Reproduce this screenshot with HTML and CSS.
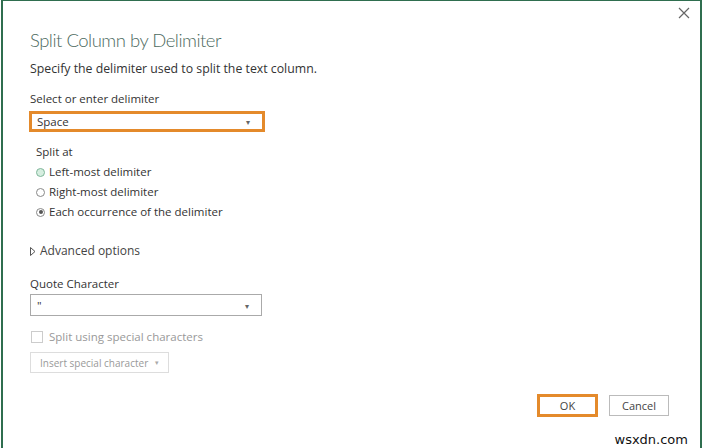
FILE: index.html
```html
<!DOCTYPE html>
<html lang="en">
<head>
    <meta charset="UTF-8">
    <title>Split Column by Delimiter</title>
    <link rel="stylesheet" href="styles.css">
</head>
<body>

<div class="dialog">
    <button class="close" type="button" aria-label="Close">
        <svg width="12" height="12" viewBox="0 0 12 12"><path d="M1 1L11 11M11 1L1 11" stroke="#666" stroke-width="1.2" fill="none"/></svg>
    </button>

    <h1 class="title">Split Column by Delimiter</h1>
    <p class="subtitle">Specify the delimiter used to split the text column.</p>

    <label class="field-label">Select or enter delimiter</label>
    <div class="select highlight">
        <span>Space</span>
        <span class="caret">&#9662;</span>
    </div>

    <div class="split-at">
        <div class="group-label">Split at</div>
        <label class="radio"><span class="dot hover"></span>Left-most delimiter</label>
        <label class="radio"><span class="dot"></span>Right-most delimiter</label>
        <label class="radio"><span class="dot checked"></span>Each occurrence of the delimiter</label>
    </div>

    <div class="advanced">
        <svg width="6" height="9" viewBox="0 0 6 9"><path d="M0.5 0.5L5 4.5L0.5 8.5Z" fill="none" stroke="#555" stroke-width="1"/></svg>
        <span>Advanced options</span>
    </div>

    <label class="field-label quote-label">Quote Character</label>
    <div class="select quote">
        <span>"</span>
        <span class="caret">&#9662;</span>
    </div>

    <label class="check disabled"><span class="box"></span>Split using special characters</label>
    <div class="insert">Insert special character <span class="caret">&#9662;</span></div>

    <div class="actions">
        <button class="btn highlight" type="button">OK</button>
        <button class="btn" type="button">Cancel</button>
    </div>

    <div class="watermark">wsxdn.com</div>
</div>

</body>
</html>
```

FILE: styles.css
```css
body { margin: 0; background: #fff; font-family: "Open Sans", "Noto Sans", sans-serif; color: #333; }
.dialog { position: relative; height: 448px; box-sizing: border-box; border-left: 2px solid #2f6e4f; border-right: 2px solid #2f6e4f; border-top: 1px solid #2f6e4f; margin-left: 1px; padding: 0 28px 0 27px; }
.close { position: absolute; top: 6px; right: 10px; background: none; border: 0; padding: 0; width: 12px; height: 12px; }
.title { margin: 26px 0 0; font-family: Lato, "Open Sans", sans-serif; font-weight: 300; font-size: 18.5px; letter-spacing: -0.5px; line-height: 26px; color: #4d6a60; }
.subtitle { margin: 7px 0 0; font-size: 12.3px; line-height: 18px; color: #333; }
.field-label { display: block; margin-top: 13px; font-size: 11.5px; line-height: 16px; color: #333; }
.select { display: flex; justify-content: space-between; align-items: center; box-sizing: border-box; border: 1px solid #aaa; background: #fff; font-size: 11.5px; padding: 0 12px 0 6px; }
.select.highlight { width: 236px; height: 21px; margin-top: 4px; margin-left: -1px; border: 3px solid #e48a2b; padding-left: 5px; }
.caret { font-size: 8px; color: #666; }
.split-at { margin: 10px 0 0 6px; }
.group-label { font-size: 11.5px; line-height: 20px; }
.radio { display: flex; align-items: center; font-size: 11.5px; line-height: 20px; }
.dot { width: 9px; height: 9px; border: 1px solid #888; border-radius: 50%; margin-right: 4px; box-sizing: border-box; position: relative; }
.dot.hover { border-color: #7fb69a; background: #d6eee0; }
.dot.checked::after { content: ""; position: absolute; left: 1.5px; top: 1.5px; width: 4px; height: 4px; border-radius: 50%; background: #555; }
.advanced { display: flex; align-items: center; gap: 4px; margin-top: 20px; font-size: 12px; line-height: 18px; color: #444; }
.quote-label { margin-top: 16px; }
.select.quote { width: 232px; height: 22px; margin-top: 2px; }
.check { display: flex; align-items: center; margin-top: 13px; font-size: 11.5px; line-height: 16px; }
.check .box { width: 10px; height: 10px; border: 1px solid #ccc; margin: 0 6px 0 1px; }
.disabled { color: #999; }
.insert { display: inline-flex; align-items: center; gap: 7px; margin-top: 7px; height: 21px; box-sizing: border-box; border: 1px solid #ddd; padding: 0 9px; font-size: 10px; color: #999; }
.insert .caret { color: #aaa; font-size: 7px; }
.actions { display: flex; justify-content: flex-end; gap: 11px; margin-top: 22px; margin-right: 3px; }
.btn { width: 60px; height: 21px; background: #fff; border: 1px solid #bbb; font-family: inherit; font-size: 11px; color: #444; padding: 0; }
.btn.highlight { width: 61px; height: 23px; margin-top: -1px; border: 3px solid #e48a2b; }
.watermark { position: absolute; right: 12px; bottom: 1px; font-family: "DejaVu Sans", sans-serif; font-size: 13px; color: #111; }
```
